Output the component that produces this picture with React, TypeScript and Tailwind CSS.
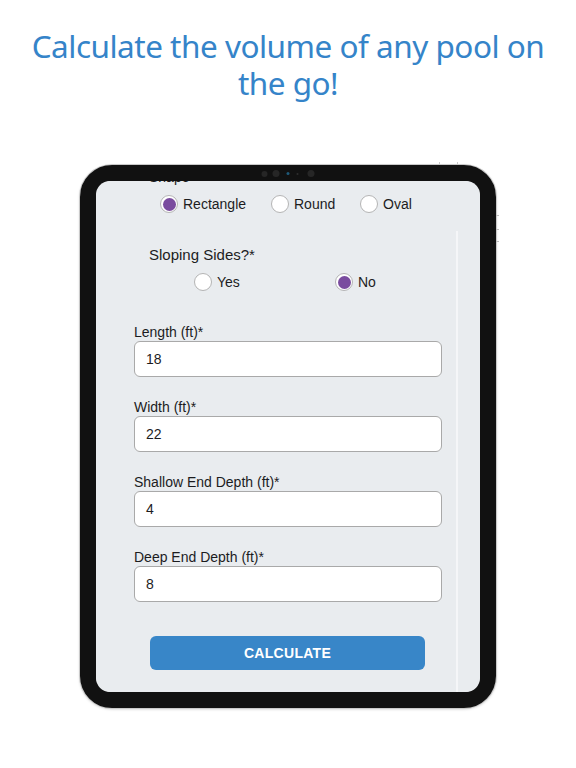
import React from "react";

type RadioProps = { label: string; checked?: boolean; className?: string };

function Radio({ label, checked = false, className = "" }: RadioProps) {
  return (
    <div className={`flex items-center gap-[5px] ${className}`}>
      <span className="flex h-[18px] w-[18px] shrink-0 items-center justify-center rounded-full border border-[#b4b4b4] bg-white">
        {checked && <span className="h-[13px] w-[13px] rounded-full bg-[#7a4c9f]" />}
      </span>
      <span className="text-[14px] leading-[18px] text-[#1c1c1e]">{label}</span>
    </div>
  );
}

function Field({ label, value }: { label: string; value: string }) {
  return (
    <div className="flex flex-col">
      <label className="text-[14px] leading-[18px] text-[#1c1c1e]">{label}</label>
      <div className="flex h-[36px] items-center rounded-[6px] border border-[#a9a9a9] bg-white px-[11px] text-[14px] text-[#1c1c1e]">
        {value}
      </div>
    </div>
  );
}

export default function App() {
  return (
    <div className="min-h-[768px] w-full bg-white" style={{ fontFamily: '"Liberation Sans", Arial, sans-serif' }}>
      {/* headline */}
      <h1
        className="pt-[27px] text-center text-[31.5px] leading-[37px] tracking-[-0.5px] text-[#3584c9] whitespace-nowrap"
        style={{ fontFamily: '"Noto Sans", "DejaVu Sans", sans-serif' }}
      >
        Calculate the volume of any pool on
        <br />
        the go!
      </h1>

      {/* tablet */}
      <div className="mx-auto mt-[64px] w-[416px]">
        <div className="relative h-[543px] rounded-[32px] border-[16px] border-[#111111] shadow-[0_0_0_1px_#c9c9c9,0_1px_3px_rgba(0,0,0,0.25)]">
          {/* camera */}
          <div className="absolute left-1/2 top-[-11px] flex -translate-x-1/2 items-center gap-[5px]">
            <span className="h-[6px] w-[6px] rounded-full bg-[#262626]" />
            <span className="h-[7px] w-[7px] rounded-full bg-[#262626]" />
            <span className="ml-[2px] h-[3px] w-[3px] rounded-full bg-[#1f5a7a]" />
            <span className="ml-[2px] h-[2px] w-[2px] rounded-full bg-[#2e2e2e]" />
            <span className="ml-[4px] h-[7px] w-[7px] rounded-full bg-[#262626]" />
          </div>
          {/* hardware buttons */}
          <span className="absolute right-[-19px] top-[34px] h-[1px] w-[3px] bg-[#bdbdbd]" />
          <span className="absolute right-[-19px] top-[48px] h-[1px] w-[3px] bg-[#bdbdbd]" />
          <span className="absolute right-[-19px] top-[60px] h-[1px] w-[3px] bg-[#bdbdbd]" />
          <span className="absolute right-[40px] top-[-19px] h-[3px] w-[1px] bg-[#c9c9c9]" />
          <span className="absolute right-[22px] top-[-19px] h-[3px] w-[1px] bg-[#c9c9c9]" />

          {/* screen */}
          <div className="relative h-full w-full overflow-hidden rounded-[14px] bg-[#e9ecef]">
            <div className="absolute right-[22px] top-[50px] bottom-0 w-[2px] bg-[#f5f6f8]" />

            <div className="px-[38px]">
              <p className="ml-[15px] mt-[-13px] text-[14px] leading-[18px] text-[#1c1c1e]">Shape*</p>
              <div className="ml-[26px] mt-[9px] flex">
                <Radio label="Rectangle" checked className="w-[111px]" />
                <Radio label="Round" className="w-[89px]" />
                <Radio label="Oval" />
              </div>

              <p className="ml-[15px] mt-[33px] text-[15px] leading-[18px] text-[#1c1c1e]">Sloping Sides?*</p>
              <div className="ml-[60px] mt-[9px] flex">
                <Radio label="Yes" className="w-[141px]" />
                <Radio label="No" checked />
              </div>

              <div className="mt-[32px] flex flex-col gap-[21px]">
                <Field label="Length (ft)*" value="18" />
                <Field label="Width (ft)*" value="22" />
                <Field label="Shallow End Depth (ft)*" value="4" />
                <Field label="Deep End Depth (ft)*" value="8" />
              </div>

              <button className="ml-[16px] mt-[34px] flex h-[34px] w-[275px] items-center justify-center rounded-[6px] bg-[#3886c8] text-[14px] font-bold tracking-[0.3px] text-white">
                CALCULATE
              </button>
            </div>
          </div>
        </div>
      </div>
    </div>
  );
}
